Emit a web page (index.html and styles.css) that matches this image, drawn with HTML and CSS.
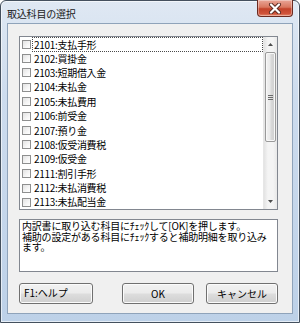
FILE: index.html
```html
<!DOCTYPE html>
<html lang="ja">
<head>
<meta charset="utf-8">
<title>取込科目の選択</title>
<link rel="stylesheet" href="styles.css">
</head>
<body>
<div class="window">
  <div class="titlebar">
    <span class="title">取込科目の選択</span>
    <div class="close">
      <svg width="14" height="11" viewBox="0 0 14 11">
        <path d="M3 1.5 L11 9.5 M11 1.5 L3 9.5" stroke="#5a2a22" stroke-width="4" stroke-linecap="round"/>
        <path d="M3 1.5 L11 9.5 M11 1.5 L3 9.5" stroke="#ffffff" stroke-width="2.2" stroke-linecap="round"/>
      </svg>
    </div>
  </div>
  <div class="client">
    <div class="listbox">
      <ul class="items">
        <li class="item"><span class="chk"></span><span class="label focus">2101:支払手形</span></li>
        <li class="item"><span class="chk"></span><span class="label">2102:買掛金</span></li>
        <li class="item"><span class="chk"></span><span class="label">2103:短期借入金</span></li>
        <li class="item"><span class="chk"></span><span class="label">2104:未払金</span></li>
        <li class="item"><span class="chk"></span><span class="label">2105:未払費用</span></li>
        <li class="item"><span class="chk"></span><span class="label">2106:前受金</span></li>
        <li class="item"><span class="chk"></span><span class="label">2107:預り金</span></li>
        <li class="item"><span class="chk"></span><span class="label">2108:仮受消費税</span></li>
        <li class="item"><span class="chk"></span><span class="label">2109:仮受金</span></li>
        <li class="item"><span class="chk"></span><span class="label">2111:割引手形</span></li>
        <li class="item"><span class="chk"></span><span class="label">2112:未払消費税</span></li>
        <li class="item"><span class="chk"></span><span class="label">2113:未払配当金</span></li>
      </ul>
      <div class="scrollbar">
        <div class="arrow">
          <svg width="5" height="3" viewBox="0 0 5 3"><path d="M0 3 L2.5 0 L5 3 Z" fill="#4d4d4d"/></svg>
        </div>
        <div class="track">
          <div class="thumb">
            <svg width="5" height="5" viewBox="0 0 5 5"><path d="M0 0.5 H5 M0 2.5 H5 M0 4.5 H5" stroke="#6b6b6b" stroke-width="1"/></svg>
          </div>
        </div>
        <div class="arrow">
          <svg width="5" height="3" viewBox="0 0 5 3"><path d="M0 0 L2.5 3 L5 0 Z" fill="#4d4d4d"/></svg>
        </div>
      </div>
    </div>
    <div class="memo">内訳書に取り込む科目にﾁｪｯｸして[OK]を押します。<br>補助の設定がある科目にﾁｪｯｸすると補助明細を取り込み<br>ます。</div>
    <div class="buttons">
      <button class="btn btn-help">F1:ヘルプ</button>
      <button class="btn btn-ok">OK</button>
      <button class="btn">キャンセル</button>
    </div>
  </div>
</div>
</body>
</html>
```

FILE: styles.css
```css
* { box-sizing: border-box; }
html, body {
  margin: 0;
  padding: 0;
  width: 300px;
  height: 323px;
  overflow: hidden;
  background: #ffffff;
}
body {
  font-family: "Noto Sans CJK JP", "Noto Sans", sans-serif;
  font-size: 10px;
  color: #000;
}
.window {
  width: 300px;
  height: 323px;
  border: 1px solid #44505e;
  border-radius: 6px 6px 0 0;
  background: linear-gradient(180deg, #dfe8f3 0%, #cddcee 30%, #bdd1e8 100%);
  display: flex;
  flex-direction: column;
  box-shadow: inset 0 0 0 1px rgba(255,255,255,0.6);
}
.titlebar {
  height: 22px;
  display: flex;
  align-items: flex-start;
  justify-content: space-between;
  padding-left: 6px;
  padding-right: 6px;
}
.title {
  font-size: 10px;
  line-height: 12px;
  margin-top: 7px;
  color: #1a1a1a;
  letter-spacing: -0.2px;
}
.close {
  width: 36px;
  height: 17px;
  margin-top: -1px;
  border: 1px solid #6b2a20;
  border-top: none;
  border-radius: 0 0 4px 4px;
  background: linear-gradient(180deg, #e9a697 0%, #d9775f 45%, #c3432a 55%, #d0533a 85%, #e58c70 100%);
  box-shadow: inset 0 0 0 1px rgba(255,255,255,0.35);
  display: flex;
  align-items: center;
  justify-content: center;
}
.client {
  margin: 0 6px 8px 6px;
  flex: 1;
  background: #f0f0f0;
  border: 1px solid #8fa3ba;
  display: flex;
  flex-direction: column;
  padding: 12px 14px 8px 11px;
}
.listbox {
  height: 174px;
  border: 1px solid #828790;
  background: #fff;
  display: flex;
  overflow: hidden;
}
.items {
  list-style: none;
  margin: 0;
  padding: 0;
  flex: 1;
  min-width: 0;
}
.item {
  height: 14.4px;
  display: flex;
  align-items: center;
  white-space: nowrap;
}
.chk {
  width: 9px;
  height: 9px;
  margin-left: 2px;
  margin-right: 1px;
  border: 1px solid #8e8f8f;
  background: linear-gradient(135deg, #e2e2e2 0%, #f6f6f6 60%, #ffffff 100%);
  flex: none;
}
.label {
  line-height: 12px;
  padding: 0 1px;
  border: 1px solid transparent;
  letter-spacing: -0.3px;
}
.label.focus {
  flex: 1;
  border: 1px dotted #4a4a4a;
  height: 15px;
  line-height: 13px;
}
.scrollbar {
  width: 14px;
  flex: none;
  display: flex;
  flex-direction: column;
  background: linear-gradient(90deg, #e3e3e3 0%, #f4f4f4 30%, #f4f4f4 70%, #e8e8e8 100%);
  border-left: 1px solid #e6e6e6;
}
.arrow {
  height: 15px;
  display: flex;
  align-items: center;
  justify-content: center;
  flex: none;
}
.track {
  flex: 1;
  display: flex;
  flex-direction: column;
}
.thumb {
  height: 90px;
  margin: 0 1px;
  border: 1px solid #9a9a9a;
  border-radius: 2px;
  background: linear-gradient(90deg, #f2f2f2 0%, #e9e9e9 45%, #d9d9d9 55%, #cfcfcf 100%);
  box-shadow: inset 0 0 0 1px #f8f8f8;
  display: flex;
  align-items: center;
  justify-content: center;
}
.memo {
  margin-top: 9px;
  height: 53px;
  border: 1px solid #828790;
  background: #fff;
  padding: 1px 1px 0 2px;
  line-height: 10.5px;
  font-size: 10px;
  white-space: nowrap;
  overflow: hidden;
  letter-spacing: -0.2px;
}
.buttons {
  margin-top: 11px;
  display: flex;
  align-items: flex-start;
}
.btn {
  height: 21px;
  width: 72px;
  border: 1px solid #707070;
  border-radius: 3px;
  background: linear-gradient(180deg, #f2f2f2 0%, #ebebeb 48%, #dddddd 52%, #cfcfcf 100%);
  box-shadow: inset 0 0 0 1px #fbfbfb;
  font-family: "Noto Sans CJK JP", "Noto Sans", sans-serif;
  font-size: 10px;
  line-height: 12px;
  color: #000;
  padding: 0;
}
.btn-help {
  width: 74px;
  text-align: left;
  padding-left: 4px;
  padding-bottom: 2px;
}
.btn-ok {
  margin-left: auto;
  margin-right: 12px;
}
```
